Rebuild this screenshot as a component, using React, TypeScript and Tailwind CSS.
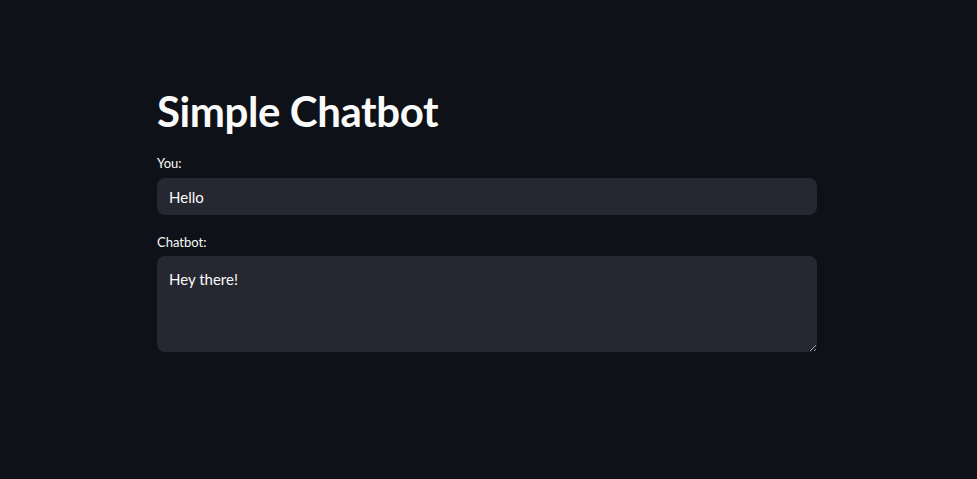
import React, { useState } from 'react';

export default function App() {
  const [message, setMessage] = useState('Hello');
  const [reply, setReply] = useState('Hey there!');

  return (
    <div className="min-h-screen w-full bg-[#0e1117] text-[#fafafa] [font-family:Lato,'Noto_Sans',sans-serif] [color-scheme:dark]">
      <div className="ml-[157px] w-[660px] pt-[86px]">
        <h1 className="text-[42px] font-bold leading-[1.2] tracking-[-0.01em] text-[#fafafa]">Simple Chatbot</h1>

        <div className="mt-[18px] flex flex-col">
          <label className="mb-[6px] text-[13px] leading-[18px] text-[#fafafa]">You:</label>
          <input
            value={message}
            onChange={(e) => setMessage(e.target.value)}
            className="h-[37px] w-full rounded-lg bg-[#262730] px-3 text-[15px] text-[#fafafa] outline-none"
          />
        </div>

        <div className="mt-[18px] flex flex-col">
          <label className="mb-[5px] text-[13px] leading-[18px] text-[#fafafa]">Chatbot:</label>
          <textarea
            value={reply}
            onChange={(e) => setReply(e.target.value)}
            className="block h-[96px] w-full resize-y rounded-lg bg-[#262730] px-3 py-[12px] text-[15px] leading-[22px] text-[#fafafa] outline-none"
          />
        </div>
      </div>
    </div>
  );
}
